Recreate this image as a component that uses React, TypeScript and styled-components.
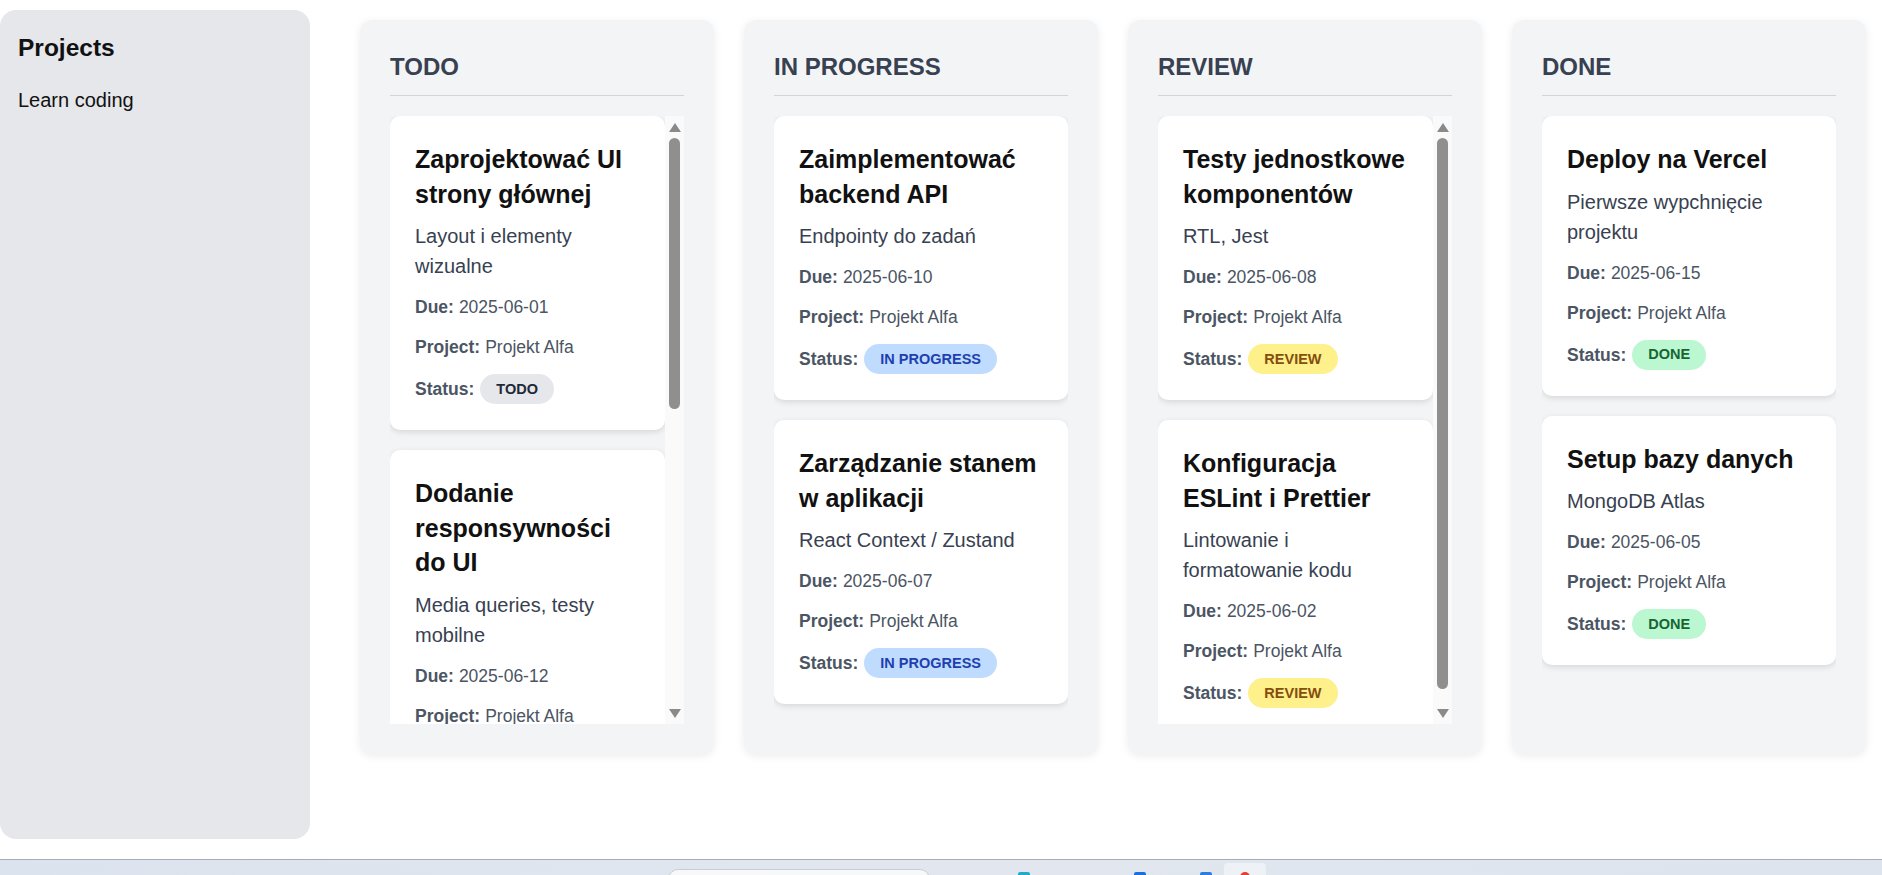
import React from "react";
import styled, { createGlobalStyle } from "styled-components";

const Global = createGlobalStyle`
  html, body { margin: 0; padding: 0; background: #ffffff; }
  body { font-family: "Liberation Sans", Arial, sans-serif; color: #111827; overflow: hidden; }
  * { box-sizing: border-box; }
`;

type Status = "TODO" | "IN PROGRESS" | "REVIEW" | "DONE";

interface Task {
  title: string;
  description: string;
  due: string;
  project: string;
  status: Status;
}

interface ColumnData {
  name: Status;
  thumb?: number;
  tasks: Task[];
}

const columns: ColumnData[] = [
  {
    name: "TODO",
    thumb: 271,
    tasks: [
      { title: "Zaprojektować UI strony głównej", description: "Layout i elementy wizualne", due: "2025-06-01", project: "Projekt Alfa", status: "TODO" },
      { title: "Dodanie responsywności do UI", description: "Media queries, testy mobilne", due: "2025-06-12", project: "Projekt Alfa", status: "TODO" },
    ],
  },
  {
    name: "IN PROGRESS",
    tasks: [
      { title: "Zaimplementować backend API", description: "Endpointy do zadań", due: "2025-06-10", project: "Projekt Alfa", status: "IN PROGRESS" },
      { title: "Zarządzanie stanem w aplikacji", description: "React Context / Zustand", due: "2025-06-07", project: "Projekt Alfa", status: "IN PROGRESS" },
    ],
  },
  {
    name: "REVIEW",
    thumb: 551,
    tasks: [
      { title: "Testy jednostkowe komponentów", description: "RTL, Jest", due: "2025-06-08", project: "Projekt Alfa", status: "REVIEW" },
      { title: "Konfiguracja ESLint i Prettier", description: "Lintowanie i formatowanie kodu", due: "2025-06-02", project: "Projekt Alfa", status: "REVIEW" },
    ],
  },
  {
    name: "DONE",
    tasks: [
      { title: "Deploy na Vercel", description: "Pierwsze wypchnięcie projektu", due: "2025-06-15", project: "Projekt Alfa", status: "DONE" },
      { title: "Setup bazy danych", description: "MongoDB Atlas", due: "2025-06-05", project: "Projekt Alfa", status: "DONE" },
    ],
  },
];

const badgeColors: Record<Status, { bg: string; fg: string }> = {
  TODO: { bg: "#e5e7eb", fg: "#1f2937" },
  "IN PROGRESS": { bg: "#bfdbfe", fg: "#1e40af" },
  REVIEW: { bg: "#fef08a", fg: "#854d0e" },
  DONE: { bg: "#bbf7d0", fg: "#166534" },
};

const Screen = styled.div`
  display: flex;
  flex-direction: column;
  width: 1882px;
  height: 875px;
  overflow: hidden;
`;

const Layout = styled.div`
  display: flex;
  flex: 1;
  min-height: 0;
`;

const Sidebar = styled.aside`
  width: 310px;
  flex-shrink: 0;
  margin: 10px 0 20px 0;
  background: #e5e7eb;
  border-radius: 16px;
  padding: 23px 18px;
`;

const SidebarTitle = styled.h2`
  margin: 0 0 22px;
  font-size: 24.5px;
  line-height: 30px;
  font-weight: 700;
  color: #111111;
`;

const ProjectItem = styled.div`
  font-size: 20px;
  line-height: 30px;
  color: #111111;
`;

const Board = styled.main`
  flex: 1;
  display: flex;
  align-items: flex-start;
  gap: 30px;
  padding: 20px 16px 0 50px;
`;

const Column = styled.section`
  flex: 1;
  min-width: 0;
  height: 734px;
  display: flex;
  flex-direction: column;
  background: #f3f4f6;
  border-radius: 12px;
  padding: 32px 30px 30px 30px;
  box-shadow: 0 2px 8px rgba(0, 0, 0, 0.08);
`;

const ColumnTitle = styled.h2`
  margin: 0;
  font-size: 24px;
  line-height: 29px;
  font-weight: 700;
  color: #374151;
  padding-bottom: 14px;
  border-bottom: 1px solid #d1d5db;
`;

const ColumnBody = styled.div`
  flex: 1;
  min-height: 0;
  margin-top: 20px;
  display: flex;
`;

const CardViewport = styled.div`
  flex: 1;
  min-width: 0;
  display: flex;
  flex-direction: column;
  gap: 20px;
  overflow: hidden;
`;

const ScrollTrack = styled.div`
  width: 19px;
  flex-shrink: 0;
  background: #fafafa;
  display: flex;
  flex-direction: column;
`;

const ScrollButton = styled.div<{ $down?: boolean }>`
  height: 19px;
  flex-shrink: 0;
  display: flex;
  justify-content: center;
  align-items: flex-start;
  padding-top: ${(p) => (p.$down ? 4 : 7)}px;
  margin-top: ${(p) => (p.$down ? "auto" : "0")};
`;

const ScrollThumb = styled.div<{ $height: number }>`
  margin: 3px 4px 0;
  height: ${(p) => p.$height}px;
  border-radius: 6px;
  background: #8f8f8f;
`;

const Card = styled.article`
  flex-shrink: 0;
  display: flex;
  flex-direction: column;
  background: #ffffff;
  border-radius: 10px;
  padding: 26px 24px 26px 25px;
  box-shadow: 0 2px 6px rgba(0, 0, 0, 0.12);
`;

const CardTitle = styled.h3`
  margin: 0 0 10px;
  font-size: 25px;
  line-height: 34.5px;
  font-weight: 700;
  color: #111111;
`;

const CardDesc = styled.p`
  margin: 0 0 13px;
  font-size: 20px;
  line-height: 30px;
  color: #374151;
`;

const MetaRow = styled.div`
  display: flex;
  align-items: center;
  min-height: 26px;
  font-size: 17.5px;
  line-height: 26px;
  color: #4b5563;
  & + & {
    margin-top: 14px;
  }
`;

const MetaLabel = styled.strong`
  font-weight: 700;
  color: #4b5563;
  margin-right: 5px;
`;

const Badge = styled.span<{ $bg: string; $fg: string }>`
  display: inline-flex;
  align-items: center;
  height: 30px;
  padding: 0 16px;
  margin-left: 1px;
  border-radius: 15px;
  background: ${(p) => p.$bg};
  color: ${(p) => p.$fg};
  font-size: 14.5px;
  font-weight: 700;
  line-height: 1;
`;

const Taskbar = styled.footer`
  height: 16px;
  flex-shrink: 0;
  border-top: 1px solid #a9adb3;
  background: linear-gradient(90deg, #dbe3ee 0%, #e2e7ef 50%, #dde4ee 100%);
  display: flex;
  align-items: flex-start;
`;

const SearchPill = styled.div`
  margin: 9px 0 0 668px;
  width: 262px;
  height: 20px;
  border-radius: 10px;
  background: #f7f8fa;
  border: 1px solid #c9ced6;
`;

const TrayIcon = styled.div<{ $color: string; $ml: number }>`
  margin: 12px 0 0 ${(p) => p.$ml}px;
  width: 12px;
  height: 8px;
  border-radius: 2px 2px 0 0;
  background: ${(p) => p.$color};
`;

const ActiveApp = styled.div`
  margin: 3px 0 0 12px;
  width: 42px;
  height: 20px;
  border-radius: 4px;
  background: #eef1f6;
  display: flex;
  justify-content: center;
  padding-top: 9px;
`;

const AppDot = styled.div`
  width: 10px;
  height: 10px;
  border-radius: 50%;
  background: #e2412f;
`;

function Arrow({ down }: { down?: boolean }) {
  return (
    <svg width="12" height="9" viewBox="0 0 12 9">
      <path d={down ? "M0 0 H12 L6 9 Z" : "M6 0 L12 9 H0 Z"} fill="#8a8a8a" />
    </svg>
  );
}

function FakeScrollbar({ thumb }: { thumb: number }) {
  return (
    <ScrollTrack>
      <ScrollButton>
        <Arrow />
      </ScrollButton>
      <ScrollThumb $height={thumb} />
      <ScrollButton $down>
        <Arrow down />
      </ScrollButton>
    </ScrollTrack>
  );
}

function TaskCard({ task }: { task: Task }) {
  const c = badgeColors[task.status];
  return (
    <Card>
      <CardTitle>{task.title}</CardTitle>
      <CardDesc>{task.description}</CardDesc>
      <MetaRow>
        <MetaLabel>Due:</MetaLabel>
        {task.due}
      </MetaRow>
      <MetaRow>
        <MetaLabel>Project:</MetaLabel>
        {task.project}
      </MetaRow>
      <MetaRow>
        <MetaLabel>Status:</MetaLabel>
        <Badge $bg={c.bg} $fg={c.fg}>
          {task.status}
        </Badge>
      </MetaRow>
    </Card>
  );
}

export default function App() {
  return (
    <>
      <Global />
      <Screen>
        <Layout>
          <Sidebar>
            <SidebarTitle>Projects</SidebarTitle>
            <ProjectItem>Learn coding</ProjectItem>
          </Sidebar>
          <Board>
            {columns.map((col) => (
              <Column key={col.name}>
                <ColumnTitle>{col.name}</ColumnTitle>
                <ColumnBody>
                  <CardViewport>
                    {col.tasks.map((t) => (
                      <TaskCard key={t.title} task={t} />
                    ))}
                  </CardViewport>
                  {col.thumb ? <FakeScrollbar thumb={col.thumb} /> : null}
                </ColumnBody>
              </Column>
            ))}
          </Board>
        </Layout>
        <Taskbar>
          <SearchPill />
          <TrayIcon $color="#27a9c9" $ml={88} />
          <TrayIcon $color="#1e6fd9" $ml={104} />
          <TrayIcon $color="#2b7de0" $ml={54} />
          <ActiveApp>
            <AppDot />
          </ActiveApp>
        </Taskbar>
      </Screen>
    </>
  );
}
